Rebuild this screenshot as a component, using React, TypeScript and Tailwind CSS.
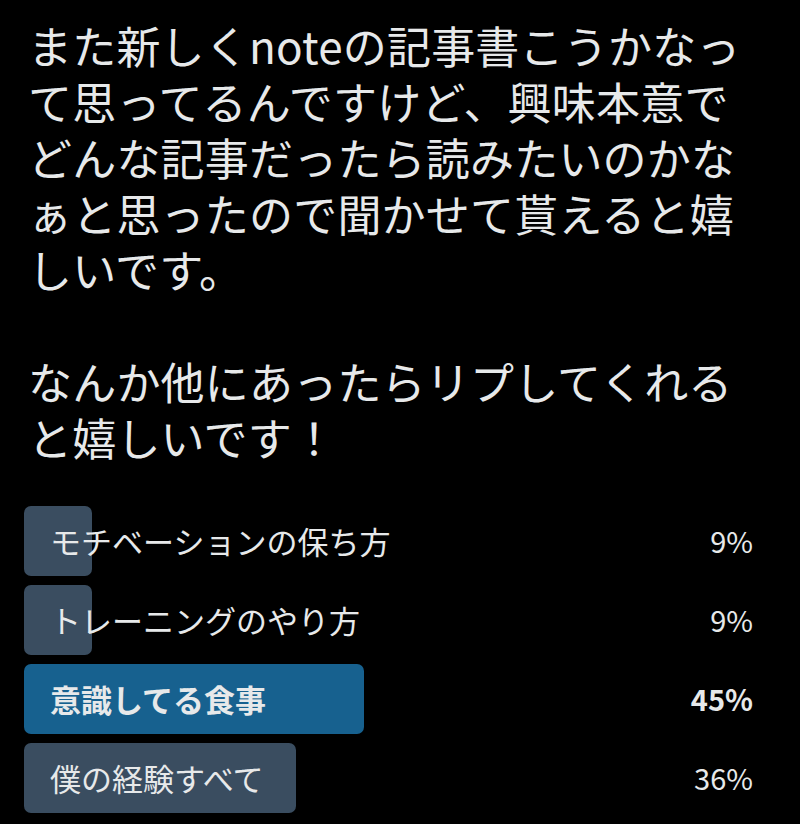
import React from 'react';

type Choice = { label: string; percent: number; winner?: boolean };

const choices: Choice[] = [
  { label: 'モチベーションの保ち方', percent: 9 },
  { label: 'トレーニングのやり方', percent: 9 },
  { label: '意識してる食事', percent: 45, winner: true },
  { label: '僕の経験すべて', percent: 36 },
];

const body = `また新しくnoteの記事書こうかなっ
て思ってるんですけど、興味本意で
どんな記事だったら読みたいのかな
ぁと思ったので聞かせて貰えると嬉
しいです。

なんか他にあったらリプしてくれる
と嬉しいです！`;

function PollRow({ choice }: { choice: Choice }) {
  return (
    <div className="relative h-[70px] flex items-center">
      <div
        className={`absolute left-0 top-0 bottom-0 rounded-[7px] ${choice.winner ? 'bg-[#17618f]' : 'bg-[#3a4d60]'}`}
        style={{ width: `${choice.percent}%` }}
      />
      <span
        className={`relative pl-[26px] text-[31px] text-[#e7e9ea] ${choice.winner ? 'font-bold' : ''}`}
      >
        {choice.label}
      </span>
      <span
        className={`relative ml-auto mr-[27px] text-[29px] text-[#e7e9ea] ${choice.winner ? 'font-bold' : ''}`}
      >
        {choice.percent}%
      </span>
    </div>
  );
}

export default function App() {
  return (
    <div
      className="w-[800px] h-[824px] bg-black overflow-hidden"
      style={{ fontFamily: '"Noto Sans CJK JP", "Noto Sans", sans-serif' }}
    >
      <p className="pl-[28px] pt-[17px] text-[44px] leading-[56px] text-[#e7e9ea] whitespace-pre-line tracking-[0.2px]">
        {body}
      </p>
      <div className="mt-[41px] ml-[24px] mr-[20px] flex flex-col gap-[9px]">
        {choices.map((c) => (
          <PollRow key={c.label} choice={c} />
        ))}
      </div>
    </div>
  );
}
